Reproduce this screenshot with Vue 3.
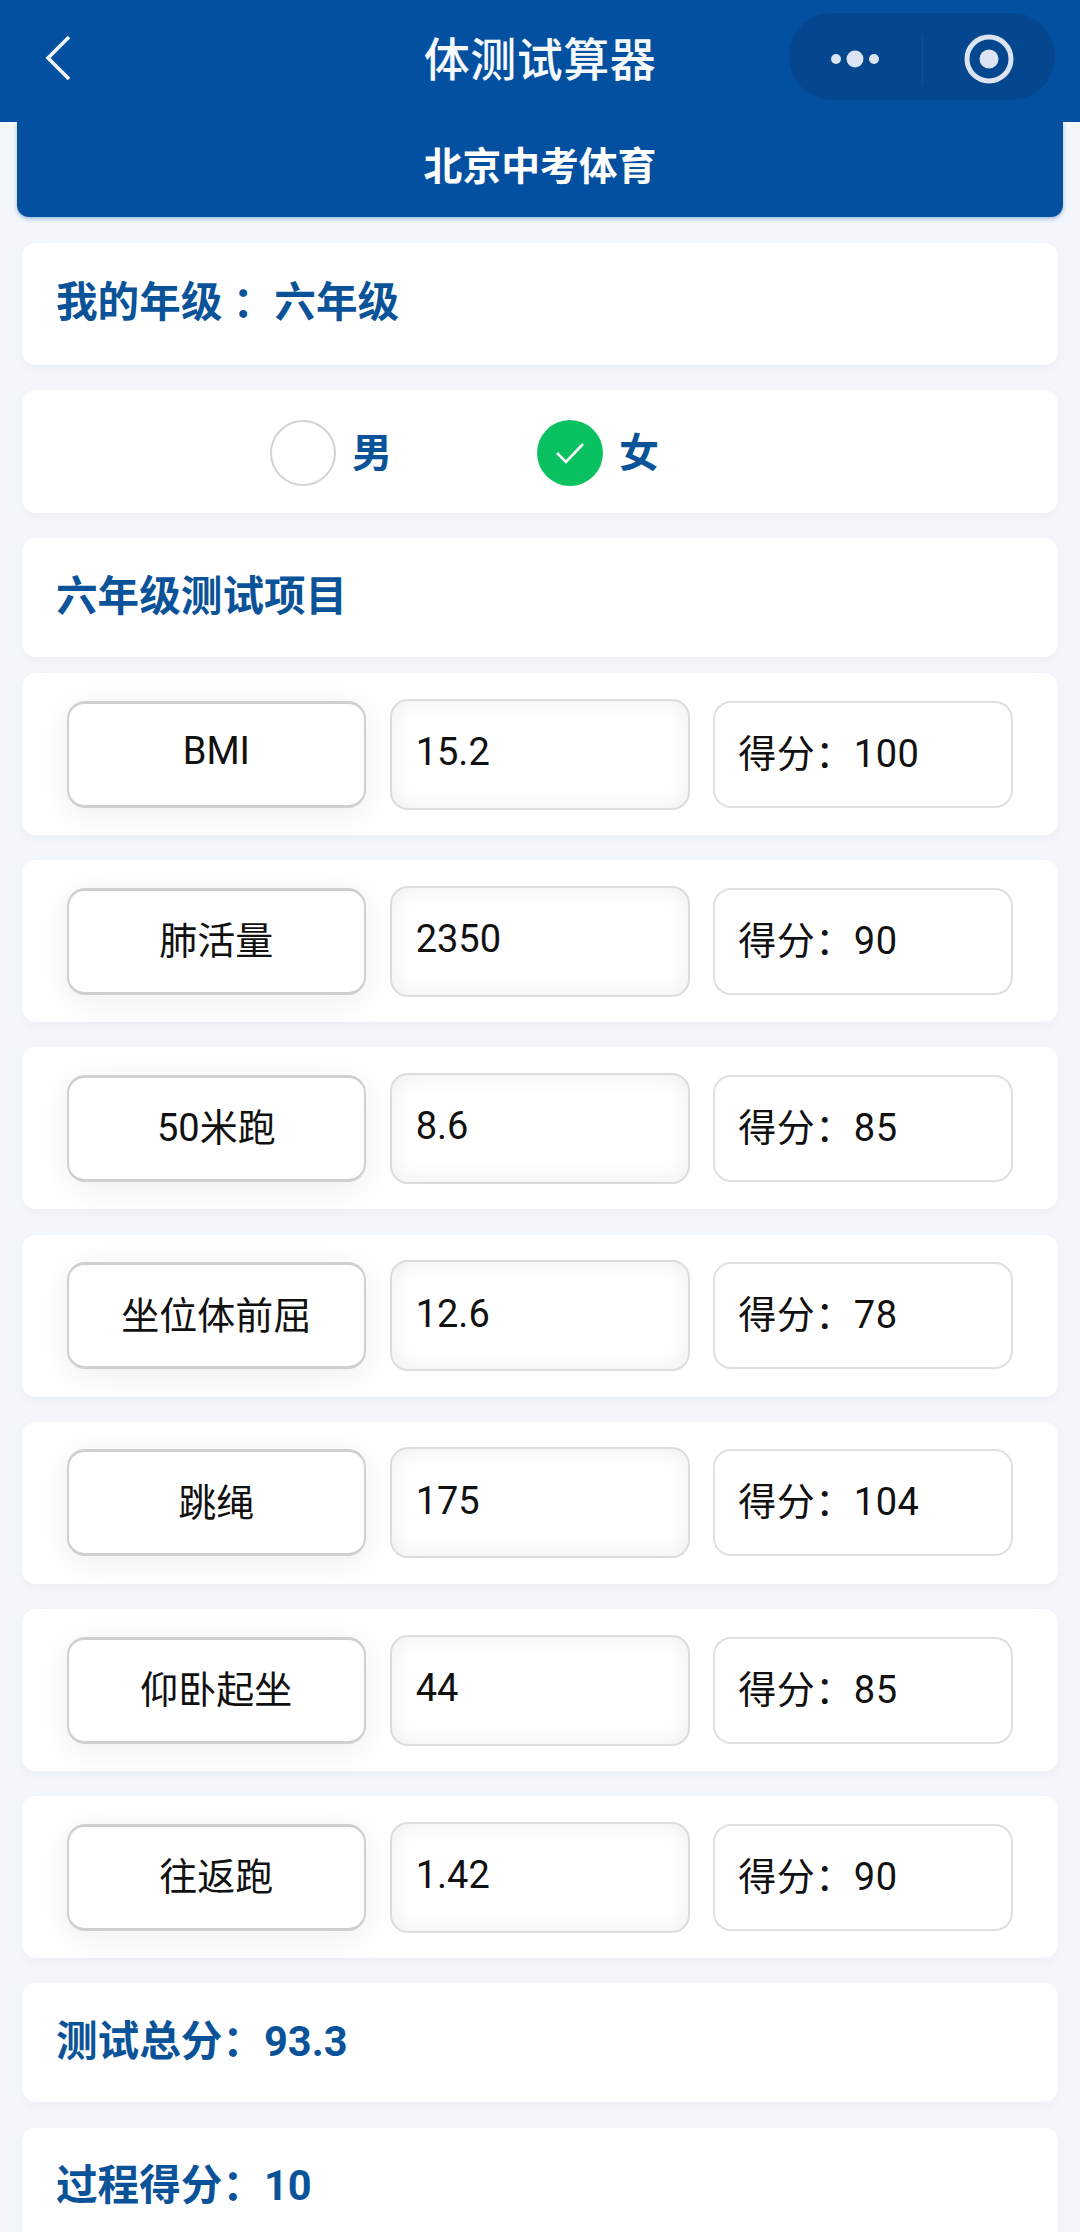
<script setup>
const rows = [
  { name: 'BMI', value: '15.2', score: '100' },
  { name: '肺活量', value: '2350', score: '90' },
  { name: '50米跑', value: '8.6', score: '85' },
  { name: '坐位体前屈', value: '12.6', score: '78' },
  { name: '跳绳', value: '175', score: '104' },
  { name: '仰卧起坐', value: '44', score: '85' },
  { name: '往返跑', value: '1.42', score: '90' },
]
</script>

<template>
  <div class="page">
    <header class="nav">
      <svg class="back" width="28" height="46" viewBox="0 0 28 46" fill="none">
        <path d="M25 2 L4 23 L25 44" stroke="#f2f6fb" stroke-width="3.6" />
      </svg>
      <h1 class="nav-title">体测试算器</h1>
      <div class="capsule">
        <div class="cap-part">
          <svg width="56" height="20" viewBox="0 0 56 20">
            <circle cx="9" cy="10" r="5" fill="#dbe4f0" />
            <circle cx="28" cy="10" r="8.5" fill="#dbe4f0" />
            <circle cx="47" cy="10" r="5" fill="#dbe4f0" />
          </svg>
        </div>
        <div class="cap-line"></div>
        <div class="cap-part">
          <svg width="50" height="50" viewBox="0 0 50 50">
            <circle cx="25" cy="25" r="22" fill="none" stroke="#dbe4f0" stroke-width="5" />
            <circle cx="25" cy="25" r="9.5" fill="#dbe4f0" />
          </svg>
        </div>
      </div>
    </header>

    <div class="banner">北京中考体育</div>

    <main class="list">
      <section class="card title-card grade-card">我的年级 ：六年级</section>

      <section class="card gender-card">
        <div class="radio-item">
          <span class="radio"></span>
          <span class="radio-label">男</span>
        </div>
        <div class="radio-item">
          <span class="radio on">
            <svg width="34" height="28" viewBox="0 0 34 28" fill="none">
              <path d="M4 14 L13 23 L30 5" stroke="#fff" stroke-width="2.6" />
            </svg>
          </span>
          <span class="radio-label">女</span>
        </div>
      </section>

      <section class="card title-card project-card">六年级测试项目</section>

      <section v-for="row in rows" :key="row.name" class="card row">
        <div class="cell name">{{ row.name }}</div>
        <div class="cell value">{{ row.value }}</div>
        <div class="cell score">得分：{{ row.score }}</div>
      </section>

      <section class="card title-card project-card">测试总分：93.3</section>
      <section class="card title-card project-card">过程得分：10</section>
    </main>
  </div>
</template>

<style scoped>
.page {
  width: 1080px;
  height: 2232px;
  overflow: hidden;
  background: #f3f6fa;
  font-family: Roboto, "Noto Sans CJK SC", sans-serif;
}
.nav {
  position: relative;
  z-index: 2;
  height: 122px;
  background: #0450a0;
  display: grid;
  grid-template-columns: 1fr auto 1fr;
  align-items: center;
}
.back {
  margin-left: 44px;
  margin-top: -6px;
}
.nav-title {
  margin: -10px 0 0;
  color: #f5f8fc;
  font-size: 46px;
  font-weight: 500;
  letter-spacing: 0.5px;
}
.capsule {
  justify-self: end;
  margin: -10px 25px 0 0;
  width: 266px;
  height: 87px;
  border-radius: 44px;
  background: #04478f;
  display: flex;
  align-items: center;
}
.cap-part {
  flex: 1;
  display: flex;
  align-items: center;
  justify-content: center;
  padding-top: 5px;
}
.cap-line {
  width: 1px;
  height: 48px;
  background: #0d5098;
  margin-top: 8px;
}
.banner {
  box-sizing: border-box;
  margin: 0 17px;
  height: 95px;
  padding-bottom: 13px;
  border-radius: 0 0 12px 12px;
  background: #0450a0;
  box-shadow: 0 2px 4px rgba(5, 81, 162, 0.35);
  color: #fff;
  font-size: 38.8px;
  font-weight: 700;
  display: flex;
  align-items: center;
  justify-content: center;
}
.list {
  margin: 26px 22px 0;
  display: flex;
  flex-direction: column;
  gap: 25.2px;
}
.card {
  background: #fff;
  border-radius: 14px;
  box-shadow: 0 4px 10px rgba(120, 140, 170, 0.05);
}
.title-card {
  box-sizing: border-box;
  flex: none;
  padding: 0 0 10px 34px;
  display: flex;
  align-items: center;
  color: #0b5399;
  font-size: 41.6px;
  font-weight: 700;
  white-space: pre;
}
.grade-card {
  height: 122px;
}
.project-card {
  height: 119px;
}
.gender-card {
  box-sizing: border-box;
  flex: none;
  height: 123px;
  padding: 3px 0 0 248px;
  display: flex;
  align-items: center;
}
.radio-item {
  width: 267px;
  display: flex;
  align-items: center;
  gap: 16px;
  color: #0b5399;
  font-size: 40px;
  font-weight: 700;
}
.radio-label {
  margin-top: -6px;
}
.radio {
  box-sizing: border-box;
  width: 66px;
  height: 66px;
  border-radius: 50%;
  border: 2px solid #d2d2d2;
  background: #fff;
  display: flex;
  align-items: center;
  justify-content: center;
}
.radio.on {
  border: none;
  background: #09c160;
}
.row {
  flex: none;
  box-sizing: border-box;
  height: 162px;
  padding: 0 45px;
  display: grid;
  grid-template-columns: repeat(3, 1fr);
  column-gap: 25px;
  align-items: center;
}
.project-card + .row {
  margin-top: -9.5px;
}
.cell {
  box-sizing: border-box;
  height: 107px;
  border-radius: 18px;
  background: #fff;
  display: flex;
  align-items: center;
  color: #111;
  font-size: 38px;
  white-space: nowrap;
}
.name {
  justify-content: center;
  padding-bottom: 7px;
  border: 2px solid #d0d0d0;
  border-top-width: 3px;
  border-bottom-width: 3px;
  box-shadow: 0 6px 36px rgba(0, 0, 0, 0.07);
}
.value {
  height: 111px;
  margin: 0 -1px;
  padding: 0 0 4px 24px;
  border: 2px solid #dcdcdc;
  box-shadow: inset 0 0 24px rgba(0, 0, 0, 0.07);
}
.score {
  margin-left: -1px;
  padding: 0 0 8px 23px;
  border: 2px solid #e0e0e0;
  letter-spacing: 0.5px;
}
</style>

<style>
html, body {
  margin: 0;
  overflow: hidden;
}
</style>
